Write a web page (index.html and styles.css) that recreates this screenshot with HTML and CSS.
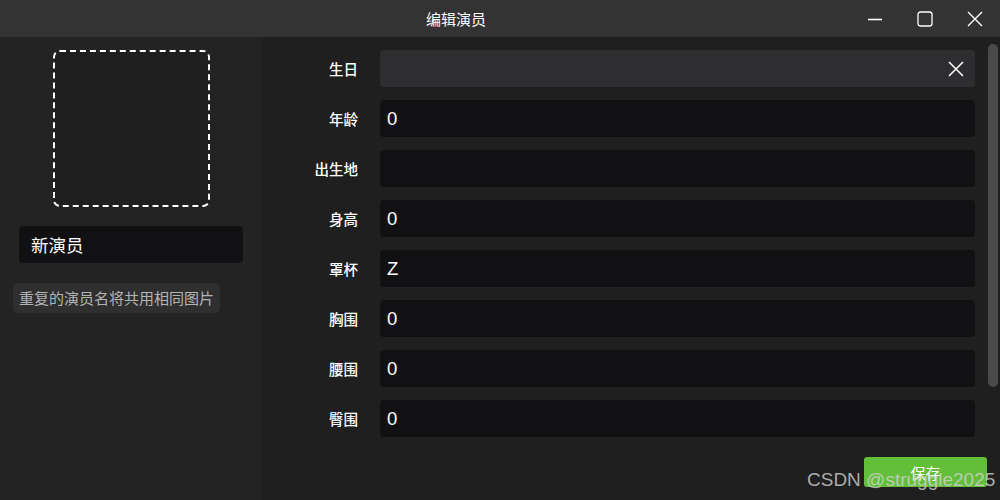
FILE: index.html
```html
<!DOCTYPE html>
<html lang="zh">
<head>
<meta charset="utf-8">
<title>编辑演员</title>
<link rel="stylesheet" href="styles.css">
</head>
<body>
<div class="window">
  <header class="titlebar">
    <div class="title">编辑演员</div>
    <div class="controls">
      <div class="ctl"><svg width="16" height="16" viewBox="0 0 16 16"><path d="M1 8.5h14" stroke="#fff" stroke-width="1.6"/></svg></div>
      <div class="ctl"><svg width="16" height="16" viewBox="0 0 16 16"><rect x="1" y="1" width="14" height="14" rx="2.5" fill="none" stroke="#fff" stroke-width="1.3"/></svg></div>
      <div class="ctl"><svg width="16" height="16" viewBox="0 0 16 16"><path d="M1 1L15 15M15 1L1 15" stroke="#fff" stroke-width="1.4"/></svg></div>
    </div>
  </header>
  <main class="main">
    <aside class="side">
      <div class="avatar"></div>
      <div class="name-input">新演员</div>
      <div class="tag">重复的演员名将共用相同图片</div>
    </aside>
    <section class="content">
      <div class="form">
        <div class="row"><label class="label">生日</label><div class="field field-date"><svg class="clear" width="16" height="16" viewBox="0 0 16 16"><path d="M1 1L15 15M15 1L1 15" stroke="#fff" stroke-width="1.5"/></svg></div></div>
        <div class="row"><label class="label">年龄</label><div class="field">0</div></div>
        <div class="row"><label class="label">出生地</label><div class="field"></div></div>
        <div class="row"><label class="label">身高</label><div class="field">0</div></div>
        <div class="row"><label class="label">罩杯</label><div class="field">Z</div></div>
        <div class="row"><label class="label">胸围</label><div class="field">0</div></div>
        <div class="row"><label class="label">腰围</label><div class="field">0</div></div>
        <div class="row"><label class="label">臀围</label><div class="field">0</div></div>
        <div class="actions"><button class="save">保存</button></div>
      </div>
      <div class="scrollbar"></div>
    </section>
  </main>
  <div class="watermark">CSDN @struggle2025</div>
</div>
</body>
</html>
```

FILE: styles.css
```css
* { box-sizing: border-box; }
html, body { margin: 0; padding: 0; }
body {
  width: 1000px;
  height: 500px;
  overflow: hidden;
  background: #1f1f1f;
  font-family: "Noto Sans CJK SC", "Noto Sans", sans-serif;
  color: #fff;
}
.window { position: relative; width: 1000px; height: 500px; display: flex; flex-direction: column; }
.titlebar {
  height: 37px;
  background: #333333;
  display: flex;
  align-items: center;
  flex-shrink: 0;
}
.title {
  flex: 1;
  padding-left: 426px;
  font-size: 15px;
  line-height: 37px;
}
.controls { display: flex; height: 37px; }
.ctl {
  width: 50px;
  height: 37px;
  display: flex;
  align-items: center;
  justify-content: center;
}
.main { flex: 1; display: flex; min-height: 0; }
.side {
  width: 263px;
  background: #232323;
  display: flex;
  flex-direction: column;
  align-items: flex-start;
  flex-shrink: 0;
}
.avatar {
  margin: 13px 0 0 53px;
  width: 157px;
  height: 157px;
  border: 2px dashed #ffffff;
  border-radius: 7px;
  background: #1f1f1f;
}
.name-input {
  margin: 19px 0 0 19px;
  width: 224px;
  height: 37px;
  background: #111113;
  border-radius: 4px;
  padding-left: 12px;
  font-size: 17.5px;
  line-height: 37px;
}
.tag {
  margin: 20px 0 0 13px;
  height: 30px;
  background: #2f2f2f;
  border-radius: 5px;
  padding: 0 6px;
  font-size: 15px;
  line-height: 30px;
  color: #b4b4b4;
}
.content { flex: 1; display: flex; }
.form {
  flex: 1;
  padding-top: 13px;
  display: flex;
  flex-direction: column;
  gap: 13px;
}
.row { display: flex; align-items: center; padding-right: 13px; }
.label {
  width: 95px;
  text-align: right;
  font-size: 14.5px;
  font-weight: 500;
  flex-shrink: 0;
}
.field {
  margin-left: 22px;
  flex: 1;
  height: 37px;
  background: #111113;
  border-radius: 4px;
  padding-left: 7px;
  font-family: "Liberation Sans", "Noto Sans", sans-serif;
  font-size: 18.5px;
  line-height: 38px;
  display: flex;
  align-items: center;
}
.field-date { background: #2e2e30; justify-content: flex-end; padding-right: 11px; }
.actions { display: flex; justify-content: flex-end; margin-top: 7px; padding-right: 1px; }
.save {
  width: 123px;
  height: 30px;
  border: none;
  border-radius: 3px;
  background: #63bf3a;
  color: #fff;
  font-family: "Noto Sans CJK SC", sans-serif;
  font-size: 15px;
}
.scrollbar {
  width: 10px;
  height: 343px;
  margin: 7px 2px 0 0;
  background: #4a4a4a;
  border-radius: 5px;
}
.watermark {
  position: absolute;
  left: 807px;
  top: 469px;
  font-family: "Liberation Sans", sans-serif;
  font-size: 19px;
  color: rgba(210, 210, 210, 0.8);
  white-space: nowrap;
}
```
